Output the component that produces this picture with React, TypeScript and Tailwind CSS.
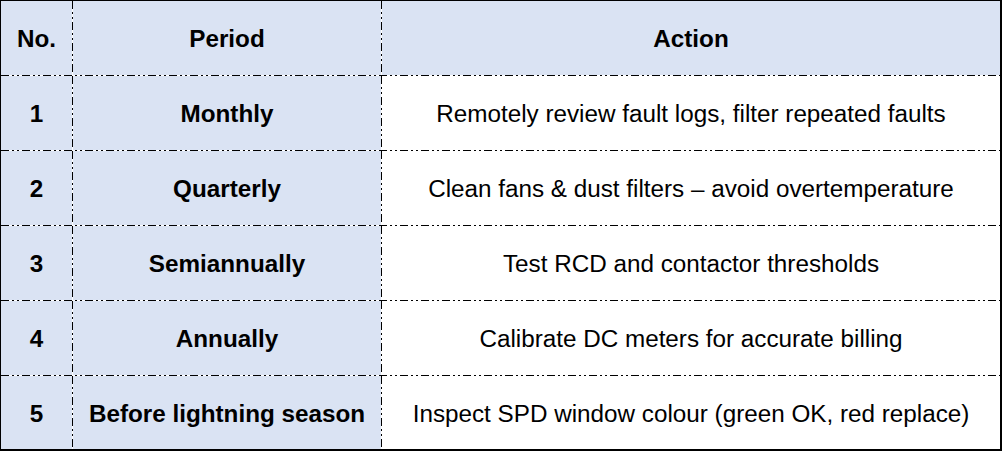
const rows = [
  { no: '1', period: 'Monthly', action: 'Remotely review fault logs, filter repeated faults' },
  { no: '2', period: 'Quarterly', action: 'Clean fans & dust filters – avoid overtemperature' },
  { no: '3', period: 'Semiannually', action: 'Test RCD and contactor thresholds' },
  { no: '4', period: 'Annually', action: 'Calibrate DC meters for accurate billing' },
  { no: '5', period: 'Before lightning season', action: 'Inspect SPD window colour (green OK, red replace)' },
];

// dash-dot-dot rules, drawn as in-flow dividers
function HLine() {
  return (
    <div className="h-px shrink-0 bg-[repeating-linear-gradient(90deg,#000_0_8px,transparent_8px_11px,#000_11px_13px,transparent_13px_16px,#000_16px_18px,transparent_18px_21px)]" />
  );
}

function VLine() {
  return (
    <div className="w-px shrink-0 bg-[repeating-linear-gradient(180deg,#000_0_8px,transparent_8px_11px,#000_11px_13px,transparent_13px_16px,#000_16px_18px,transparent_18px_21px)]" />
  );
}

function Row({
  no,
  period,
  action,
  header = false,
  last = false,
}: {
  no: string;
  period: string;
  action: string;
  header?: boolean;
  last?: boolean;
}) {
  return (
    <div className={`flex ${last ? 'flex-1' : 'h-[74px]'}`}>
      <div className="w-[71px] shrink-0 flex items-center justify-center pt-[3px] bg-[#dae3f3] font-bold">{no}</div>
      <VLine />
      <div className="w-[308px] shrink-0 flex items-center justify-center pt-[3px] bg-[#dae3f3] font-bold">{period}</div>
      <VLine />
      <div
        className={`flex-1 flex items-center justify-center pt-[3px] ${header ? 'bg-[#dae3f3] font-bold' : 'bg-white'}`}
      >
        {action}
      </div>
    </div>
  );
}

export default function App() {
  return (
    <div className="w-[1002px] h-[451px] bg-white">
      <div className="w-[1002px] h-[451px] flex flex-col border-l border-t border-r-2 border-b-2 border-black text-[24.25px] leading-none text-black font-['Liberation_Sans',Arial,sans-serif]">
        <Row no="No." period="Period" action="Action" header />
        {rows.map((r, i) => (
          <div key={r.no} className={`flex flex-col ${i === rows.length - 1 ? 'flex-1' : ''}`}>
            <HLine />
            <Row {...r} last={i === rows.length - 1} />
          </div>
        ))}
      </div>
    </div>
  );
}
